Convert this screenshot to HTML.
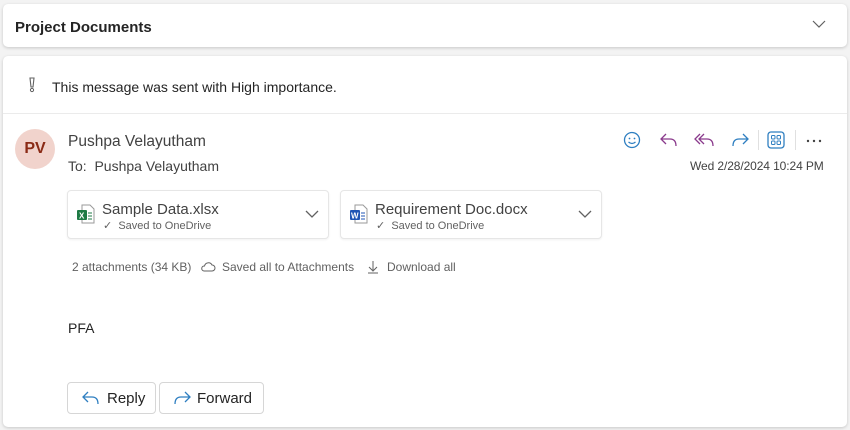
<!DOCTYPE html>
<html><head><style>
body{margin:0;width:850px;height:430px;background:#f3f3f3;font-family:"Liberation Sans",sans-serif;color:#242424;position:relative;overflow:hidden}
.card{position:absolute;background:#fff;border-radius:5px;box-shadow:0 1px 3px rgba(0,0,0,.18)}
.a{position:absolute}
.att{position:absolute;top:190px;height:47px;border:1px solid #e6e6e6;border-radius:4px;background:#fff;box-shadow:0 1px 2px rgba(0,0,0,.06)}
.btn{position:absolute;top:382px;height:30px;border:1px solid #d6d6d6;border-radius:4px;background:#fff;font-size:15px;line-height:30px}
svg{position:absolute}
</style></head><body>
<div class="card" style="left:3px;top:4px;width:844px;height:43px">
 <div class="a" style="left:12px;top:15px;font-size:15px;color:#242424;font-weight:bold">Project Documents</div>
 <svg style="left:808px;top:14px" width="16" height="12"><path d="M2 3 L8 9 L14 3" fill="none" stroke="#616161" stroke-width="1.2"/></svg>
</div>
<div class="card" style="left:3px;top:56px;width:844px;height:371px">
 <svg style="left:24px;top:20px" width="10" height="18"><path d="M3 2 h4 l-1 9 h-2 z" fill="none" stroke="#616161" stroke-width="1.1"/><circle cx="5" cy="14" r="1.6" fill="none" stroke="#616161"/></svg>
 <div class="a" style="left:49px;top:23px;font-size:14px">This message was sent with High importance.</div>
 <div class="a" style="left:0;top:57px;width:844px;height:1px;background:#ebebeb"></div>
 <div class="a" style="left:12px;top:73px;width:40px;height:40px;border-radius:50%;background:#f1d3cc;color:#8a2a15;font-size:16px;font-weight:bold;text-align:center;line-height:40px">PV</div>
 <div class="a" style="left:65px;top:77px;font-size:15.5px;color:#424242">Pushpa Velayutham</div>
 <div class="a" style="left:65px;top:102px;font-size:14px;color:#424242">To:&nbsp; Pushpa Velayutham</div>
 <svg style="left:619px;top:74px" width="20" height="20"><circle cx="10" cy="10" r="7.5" fill="none" stroke="#2f7fc1" stroke-width="1.3"/><circle cx="7.5" cy="8.5" r=".9" fill="#2f7fc1"/><circle cx="12.5" cy="8.5" r=".9" fill="#2f7fc1"/><path d="M6.5 12 q3.5 3 7 0" fill="none" stroke="#2f7fc1" stroke-width="1.2"/></svg>
 <svg style="left:655px;top:74px" width="22" height="20"><path d="M8 4 L3 9 L8 14 M3 9 H12 Q18 9 18 16" fill="none" stroke="#8a3a8c" stroke-width="1.3"/></svg>
 <svg style="left:690px;top:74px" width="24" height="20"><path d="M7 4 L2 9 L7 14 M11 4 L6 9 L11 14 M6 9 H14 Q20 9 20 16" fill="none" stroke="#8a3a8c" stroke-width="1.3"/></svg>
 <svg style="left:726px;top:74px" width="22" height="20"><path d="M14 4 L19 9 L14 14 M19 9 H10 Q4 9 4 16" fill="none" stroke="#2f7fc1" stroke-width="1.3"/></svg>
 <div class="a" style="left:755px;top:74px;width:1px;height:20px;background:#e0e0e0"></div>
 <svg style="left:763px;top:74px" width="20" height="20"><rect x="2" y="2" width="16" height="16" rx="3" fill="none" stroke="#2f7fc1" stroke-width="1.3"/><rect x="5.5" y="5.5" width="3.5" height="3.5" rx="1" fill="none" stroke="#2f7fc1"/><rect x="11" y="5.5" width="3.5" height="3.5" rx="1" fill="none" stroke="#2f7fc1"/><rect x="5.5" y="11" width="3.5" height="3.5" rx="1" fill="none" stroke="#2f7fc1"/><rect x="11" y="11" width="3.5" height="3.5" rx="1" fill="none" stroke="#2f7fc1"/></svg>
 <div class="a" style="left:792px;top:74px;width:1px;height:20px;background:#e0e0e0"></div>
 <svg style="left:802px;top:82px" width="18" height="6"><circle cx="3" cy="3" r="1.2" fill="#424242"/><circle cx="9" cy="3" r="1.2" fill="#424242"/><circle cx="15" cy="3" r="1.2" fill="#424242"/></svg>
 <div class="a" style="left:687px;top:103px;font-size:12px;color:#424242;letter-spacing:-0.1px">Wed 2/28/2024 10:24 PM</div>
</div>
<div class="att" style="left:67px;width:260px">
 <svg style="left:8px;top:13px" width="20" height="20"><path d="M6 1 h8 l4 4 v14 h-12 z" fill="#fff" stroke="#9a9a9a"/><rect x="1" y="6" width="10" height="10" rx="1" fill="#1d7a44"/><text x="3" y="14.5" font-size="8" font-weight="bold" fill="#fff" font-family="Liberation Sans">X</text><path d="M12 9h4M12 12h4M12 15h4" stroke="#1d7a44"/></svg>
 <div class="a" style="left:34px;top:10px;font-size:15px;color:#424242">Sample Data.xlsx</div>
 <div class="a" style="left:35px;top:28px;font-size:11px;color:#616161">✓&nbsp; Saved to OneDrive</div>
 <svg style="left:236px;top:17px" width="16" height="12"><path d="M2 3 L8 9 L14 3" fill="none" stroke="#616161" stroke-width="1.3"/></svg>
</div>
<div class="att" style="left:340px;width:260px">
 <svg style="left:8px;top:13px" width="20" height="20"><path d="M6 1 h8 l4 4 v14 h-12 z" fill="#fff" stroke="#9a9a9a"/><rect x="1" y="6" width="10" height="10" rx="1" fill="#1f55b5"/><text x="2" y="14.5" font-size="8" font-weight="bold" fill="#fff" font-family="Liberation Sans">W</text><path d="M12 9h4M12 12h4M12 15h4" stroke="#1f55b5"/></svg>
 <div class="a" style="left:34px;top:10px;font-size:15px;color:#424242">Requirement Doc.docx</div>
 <div class="a" style="left:35px;top:28px;font-size:11px;color:#616161">✓&nbsp; Saved to OneDrive</div>
 <svg style="left:236px;top:17px" width="16" height="12"><path d="M2 3 L8 9 L14 3" fill="none" stroke="#616161" stroke-width="1.3"/></svg>
</div>
<div class="a" style="left:72px;top:260px;font-size:12px;color:#616161">2 attachments (34 KB)</div>
<svg style="left:200px;top:260px" width="16" height="14"><path d="M4 11 h8 a3 3 0 0 0 0-6 a4 4 0 0 0-7.5 1 a2.5 2.5 0 0 0-0.5 5z" fill="none" stroke="#616161"/></svg>
<div class="a" style="left:222px;top:260px;font-size:12px;color:#616161">Saved all to Attachments</div>
<svg style="left:366px;top:259px" width="14" height="16"><path d="M7 2 v9 M3 8 l4 4 4-4 M2 14 h10" fill="none" stroke="#616161"/></svg>
<div class="a" style="left:387px;top:260px;font-size:12px;color:#616161">Download all</div>
<div class="a" style="left:68px;top:320px;font-size:14px">PFA</div>
<div class="btn" style="left:67px;width:87px">
 <svg style="left:13px;top:7px" width="20" height="16"><path d="M7 2 L2 7 L7 12 M2 7 H11 Q17 7 17 14" fill="none" stroke="#2f7fc1" stroke-width="1.3"/></svg>
 <span class="a" style="left:39px;top:1px">Reply</span></div>
<div class="btn" style="left:159px;width:103px">
 <svg style="left:12px;top:7px" width="20" height="16"><path d="M13 2 L18 7 L13 12 M18 7 H9 Q3 7 3 14" fill="none" stroke="#2f7fc1" stroke-width="1.3"/></svg>
 <span class="a" style="left:37px;top:1px">Forward</span></div>
</body></html>
